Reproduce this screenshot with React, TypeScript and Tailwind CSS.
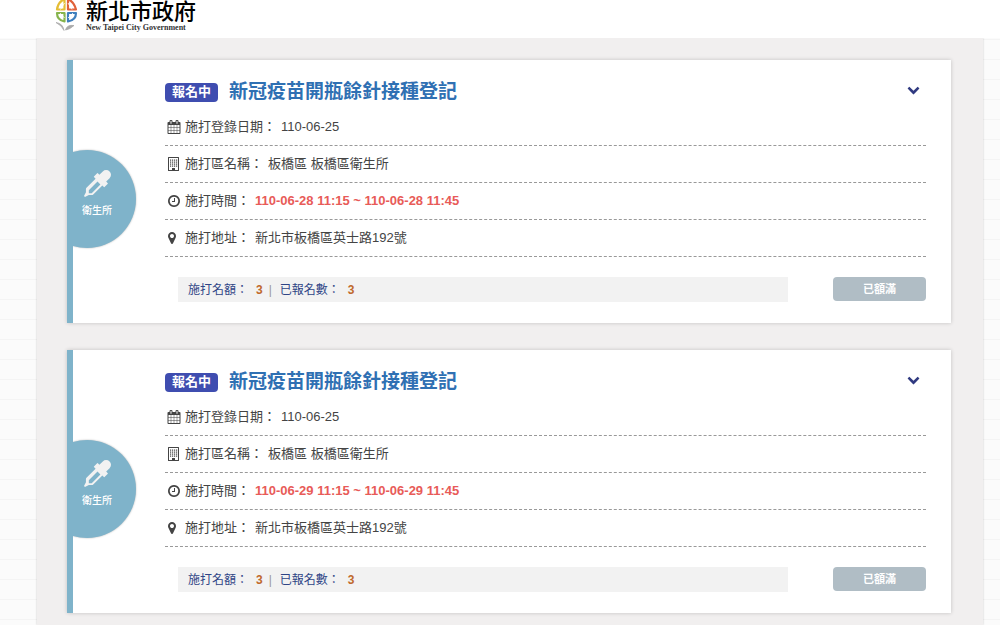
import type { ReactNode } from 'react';

const CALENDAR =
  'M192 1664h288v-288h-288v288zm352 0h320v-288h-320v288zm-352-352h288v-320h-288v320zm352 0h320v-320h-320v320zm-352-384h288v-288h-288v288zm736 736h320v-288h-320v288zm-384-736h320v-288h-320v288zm768 736h288v-288h-288v288zm-384-352h320v-320h-320v320zm-352-864v-288q0-13-9.5-22.5t-22.5-9.5h-64q-13 0-22.5 9.5t-9.5 22.5v288q0 13 9.5 22.5t22.5 9.5h64q13 0 22.5-9.5t9.5-22.5zm736 864h288v-320h-288v320zm-384-384h320v-288h-320v288zm384 0h288v-288h-288v288zm32-480v-288q0-13-9.5-22.5t-22.5-9.5h-64q-13 0-22.5 9.5t-9.5 22.5v288q0 13 9.5 22.5t22.5 9.5h64q13 0 22.5-9.5t9.5-22.5zm384-64v1280q0 52-38 90t-90 38h-1408q-52 0-90-38t-38-90v-1280q0-52 38-90t90-38h128v-96q0-66 47-113t113-47h64q66 0 113 47t47 113v96h384v-96q0-66 47-113t113-47h64q66 0 113 47t47 113v96h128q52 0 90 38t38 90z';
const CLOCK =
  'M1024 544v448q0 14-9 23t-23 9h-320q-14 0-23-9t-9-23v-64q0-14 9-23t23-9h224v-352q0-14 9-23t23-9h64q14 0 23 9t9 23zm416 352q0-148-73-273t-198-198-273-73-273 73-198 198-73 273 73 273 198 198 273 73 273-73 198-198 73-273zm224 0q0 209-103 385.5t-279.5 279.5-385.5 103-385.5-103-279.5-279.5-103-385.5 103-385.5 279.5-279.5 385.5-103 385.5 103 279.5 279.5 103 385.5z';
const MARKER =
  'M1152 640q0-106-75-181t-181-75-181 75-75 181 75 181 181 75 181-75 75-181zm256 0q0 109-33 179l-364 774q-16 33-47.5 52t-67.5 19-67.5-19-46.5-52l-365-774q-33-70-33-179 0-212 150-362t362-150 362 150 150 362z';
const CHEVRON =
  'M1683 808l-742 741q-19 19-45 19t-45-19l-742-741q-19-19-19-45.5t19-45.5l166-165q19-19 45-19t45 19l531 531 531-531q19-19 45-19t45 19l166 165q19 19 19 45.5t-19 45.5z';
const DROPPER =
  'M1698 94q94 94 94 226.5t-94 225.5l-225 223 104 104q10 10 10 23t-10 23l-210 210q-10 10-23 10t-23-10l-105-105-603 603q-37 37-90 37h-203l-256 128-64-64 128-256v-203q0-53 37-90l603-603-105-105q-10-10-10-23t10-23l210-210q10-10 23-10t23 10l104 104 223-225q93-94 225.5-94t226.5 94zm-1186 1442l576-576-192-192-576 576v192h192z';

function Icon({ d, className }: { d: string; className: string }) {
  return (
    <svg viewBox="0 0 1792 1792" className={className} fill="currentColor" aria-hidden="true">
      <path d={d} />
    </svg>
  );
}

function BuildingIcon() {
  const columns = [3, 5, 7, 9];
  const rows = [2.5, 4.5, 6.5, 8.5];
  return (
    <svg viewBox="0 0 13 14" className="h-3.5 w-[13px]" fill="currentColor" aria-hidden="true">
      <path fillRule="evenodd" d="M1.500 0h10q.5 0 .5.5v13q0 .5-.5.5h-10q-.5 0-.5-.5V.5Q1 0 1.500 0zM2 1v12h3v-2h3v2h3V1z" />
      {rows.map((y) => columns.map((x) => <rect key={`${x}-${y}`} x={x} y={y} width="1.2" height="1.2" />))}
    </svg>
  );
}

function Emblem() {
  return (
    <svg viewBox="0 0 24 32" className="h-8 w-6" fill="none" strokeWidth="2.2" strokeLinejoin="round" aria-hidden="true">
      <path d="M10.500-1v10.500H3Q4 2 10.500-1z" stroke="#e5bd35" />
      <path d="M14-1v10.500h8Q20 2 14-1z" stroke="#e0613a" />
      <path d="M3 13h7.500v8.500Q3 20 3 13z" stroke="#86b44c" />
      <path d="M14 13h8q0 7-8 8.500z" stroke="#3f7fbd" />
      <path d="M6.500 9.500L10.500 3M18 9.500L14 3M6 13l4.500 5M19 13l-5 5" stroke="#fff" strokeWidth="0.800" />
      <path d="M2 22.500q7 1 8 8-2-5-8-8zM20 25.500q-7-1-8.500 4.500 4-.5 8.500-4.500z" fill="#aaa" stroke="#aaa" strokeWidth="0.800" />
    </svg>
  );
}

type Session = { date: string; place: string; time: string; address: string; quota: number; taken: number };

const sessions: Session[] = [
  { date: '110-06-25', place: '板橋區 板橋區衛生所', time: '110-06-28 11:15 ~ 110-06-28 11:45', address: '新北市板橋區英士路192號', quota: 3, taken: 3 },
  { date: '110-06-25', place: '板橋區 板橋區衛生所', time: '110-06-29 11:15 ~ 110-06-29 11:45', address: '新北市板橋區英士路192號', quota: 3, taken: 3 },
];

function Row({ icon, label, value, strong }: { icon: ReactNode; label: string; value: string; strong?: boolean }) {
  return (
    <li className="flex h-[37px] items-center border-b border-dashed border-[#999] pl-0.5 text-[13px] text-[#444]">
      <span className="flex w-[18px] items-center">{icon}</span>
      <span className="mr-[5px]">{label}：</span>
      <span className={strong ? 'font-bold text-[#e85b58]' : ''}>{value}</span>
    </li>
  );
}

function Card({ session }: { session: Session }) {
  return (
    <article className="flex border-l-6 border-[#7fb3ca] bg-white shadow-[0_0_4px_rgba(0,0,0,0.2)]">
      <div className="w-[92px] shrink-0 overflow-hidden pt-[90px]">
        <div className="-ml-[35px] flex size-[98px] flex-col items-center rounded-full bg-[#7fb3ca] pt-5 pl-5 text-[#f2f2f2] shadow-[0_0_2px_rgba(0,0,0,0.3)]">
          <Icon d={DROPPER} className="size-[27px]" />
          <span className="mt-1.5 text-[10px] leading-4 font-medium text-white">衛生所</span>
        </div>
      </div>
      <div className="min-w-0 flex-1 pt-[22px] pr-[25px] pb-[21px]">
        <div className="flex h-5 items-center">
          <span className="flex h-[19px] items-center rounded-sm bg-[#3f4db0] px-[7px] text-[13px] font-bold text-white">報名中</span>
          <h2 className="ml-[11px] text-[19px] leading-5 font-bold text-[#2f70b3]">新冠疫苗開瓶餘針接種登記</h2>
          <button type="button" aria-label="展開" className="mr-1.5 mb-1.5 ml-auto text-[#303a80]">
            <Icon d={CHEVRON} className="size-[13px]" />
          </button>
        </div>
        <ul className="mt-[7px]">
          <Row icon={<Icon d={CALENDAR} className="h-3.5 w-3.5" />} label="施打登錄日期" value={session.date} />
          <Row icon={<BuildingIcon />} label="施打區名稱" value={session.place} />
          <Row icon={<Icon d={CLOCK} className="size-[14px]" />} label="施打時間" value={session.time} strong />
          <Row icon={<Icon d={MARKER} className="-ml-0.5 size-[14px]" />} label="施打地址" value={session.address} />
        </ul>
        <div className="mt-5 flex items-start pl-[13px]">
          <p className="mr-[45px] flex h-[25px] flex-1 items-center bg-[#f2f2f2] pl-2.5 text-[12px] text-[#2f4586]">
            施打名額：
            <b className="ml-2 text-[#c0692c]">{session.quota}</b>
            <span className="mr-2 ml-1.5 text-[#999]">|</span>
            已報名數：
            <b className="ml-2 text-[#c0692c]">{session.taken}</b>
          </p>
          <button type="button" className="h-6 w-[93px] rounded-sm bg-[#b0bdc5] text-[11px] font-bold text-white">已額滿</button>
        </div>
      </div>
    </article>
  );
}

export default function App() {
  return (
    <div className="flex min-h-screen flex-col bg-[#fbfbfb] bg-[repeating-linear-gradient(to_bottom,transparent_0px,transparent_19px,#f4f4f4_19px,#f4f4f4_20px)] font-['Liberation_Sans','Noto_Sans_CJK_TC',sans-serif]">
      <header className="relative flex h-[38px] items-end overflow-hidden bg-white pl-[54px]">
        <a href="#" className="mb-1.5 flex items-end gap-2 text-black">
          <Emblem />
          <span className="flex flex-col">
            <span className="text-[22px] leading-6 font-medium">新北市政府</span>
            <span className="font-['Liberation_Serif',serif] text-[8px] leading-2 font-bold text-[#333]">New Taipei City Government</span>
          </span>
        </a>
      </header>
      <main className="mr-[17px] ml-[37px] flex flex-1 flex-col gap-[27px] bg-[#f1efef] pt-[22px] pr-8 pb-3 pl-[30px] shadow-[0_0_2px_rgba(0,0,0,0.2)]">
        {sessions.map((s) => (
          <Card key={s.time} session={s} />
        ))}
      </main>
    </div>
  );
}
